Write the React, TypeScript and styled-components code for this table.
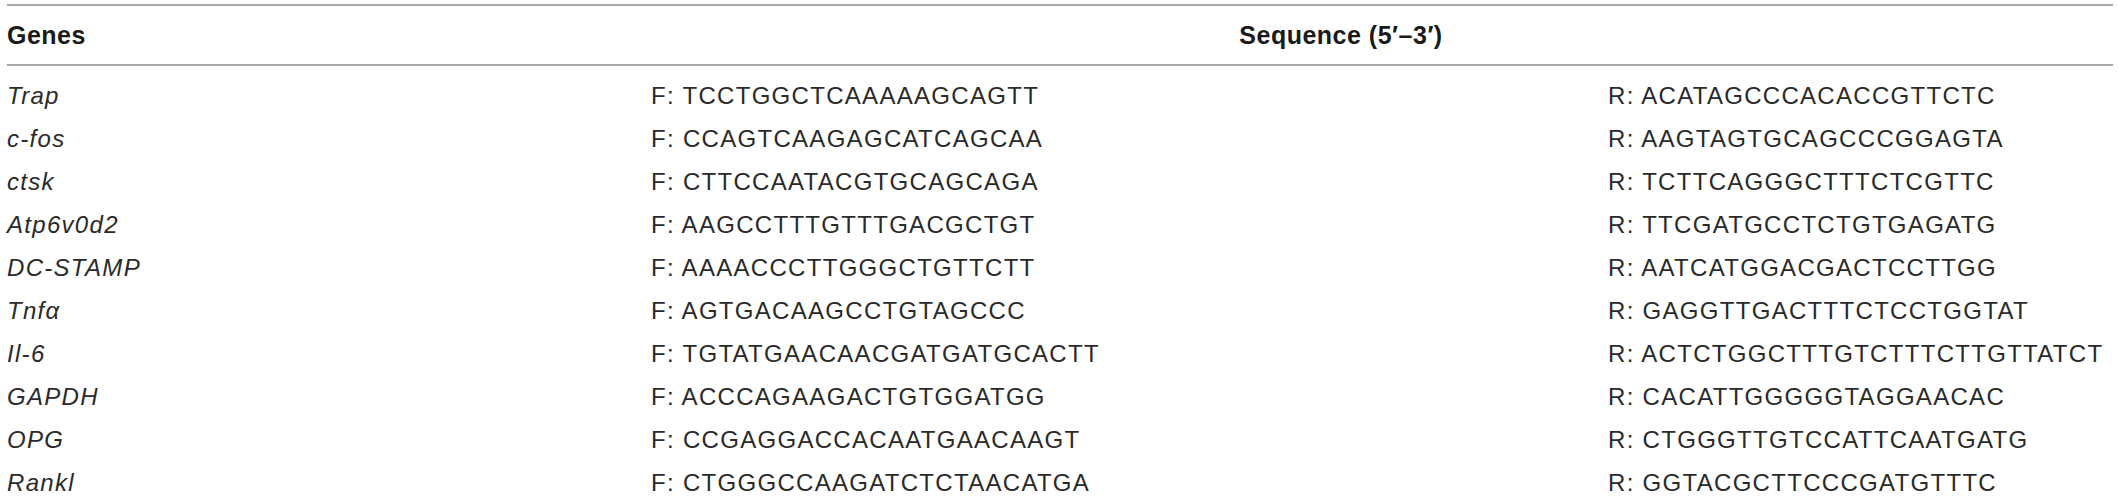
import styled, { createGlobalStyle } from 'styled-components';

interface Primer {
	gene: string;
	forward: string;
	reverse: string;
}

const primers: Primer[] = [
	{ gene: 'Trap', forward: 'TCCTGGCTCAAAAAGCAGTT', reverse: 'ACATAGCCCACACCGTTCTC' },
	{ gene: 'c-fos', forward: 'CCAGTCAAGAGCATCAGCAA', reverse: 'AAGTAGTGCAGCCCGGAGTA' },
	{ gene: 'ctsk', forward: 'CTTCCAATACGTGCAGCAGA', reverse: 'TCTTCAGGGCTTTCTCGTTC' },
	{ gene: 'Atp6v0d2', forward: 'AAGCCTTTGTTTGACGCTGT', reverse: 'TTCGATGCCTCTGTGAGATG' },
	{ gene: 'DC-STAMP', forward: 'AAAACCCTTGGGCTGTTCTT', reverse: 'AATCATGGACGACTCCTTGG' },
	{ gene: 'Tnf\u03b1', forward: 'AGTGACAAGCCTGTAGCCC', reverse: 'GAGGTTGACTTTCTCCTGGTAT' },
	{ gene: 'Il-6', forward: 'TGTATGAACAACGATGATGCACTT', reverse: 'ACTCTGGCTTTGTCTTTCTTGTTATCT' },
	{ gene: 'GAPDH', forward: 'ACCCAGAAGACTGTGGATGG', reverse: 'CACATTGGGGGTAGGAACAC' },
	{ gene: 'OPG', forward: 'CCGAGGACCACAATGAACAAGT', reverse: 'CTGGGTTGTCCATTCAATGATG' },
	{ gene: 'Rankl', forward: 'CTGGGCCAAGATCTCTAACATGA', reverse: 'GGTACGCTTCCCGATGTTTC' },
];

const GlobalStyle = createGlobalStyle`
	body {
		margin: 0;
		background: #ffffff;
		font-family: 'Liberation Sans', Arial, sans-serif;
		color: #2a2a2a;
	}
`;

const Table = styled.div`
	display: grid;
	grid-template-columns: 644px 957px 505px;
	margin: 4px 0 0 7px;
	width: 2106px;
`;

const HeaderRow = styled.div`
	grid-column: 1 / -1;
	display: grid;
	grid-template-columns: subgrid;
	height: 58px;
	align-items: center;
	border-top: 2px solid #a8a8a8;
	border-bottom: 2px solid #a8a8a8;
	margin-bottom: 8px;
`;

const HeaderCell = styled.div<{ wide?: boolean }>`
	font-weight: bold;
	font-size: 25px;
	letter-spacing: 0.5px;
	color: #1a1a1a;
	${({ wide }) =>
		wide &&
		`
		grid-column: 2 / 4;
		text-align: center;
		padding-right: 82px;
		`}
`;

const Row = styled.div`
	grid-column: 1 / -1;
	display: grid;
	grid-template-columns: subgrid;
	height: 43px;
	align-items: center;
`;

const Cell = styled.div<{ italic?: boolean }>`
	font-size: 24px;
	letter-spacing: 1.3px;
	white-space: nowrap;
	font-style: ${({ italic }) => (italic ? 'italic' : 'normal')};
`;

const App = () => (
	<>
		<GlobalStyle />
		<Table>
			<HeaderRow>
				<HeaderCell>Genes</HeaderCell>
				<HeaderCell wide>Sequence (5′–3′)</HeaderCell>
			</HeaderRow>
			{primers.map((p) => (
				<Row key={p.gene}>
					<Cell italic>{p.gene}</Cell>
					<Cell>F: {p.forward}</Cell>
					<Cell>R: {p.reverse}</Cell>
				</Row>
			))}
		</Table>
	</>
);

export default App;
